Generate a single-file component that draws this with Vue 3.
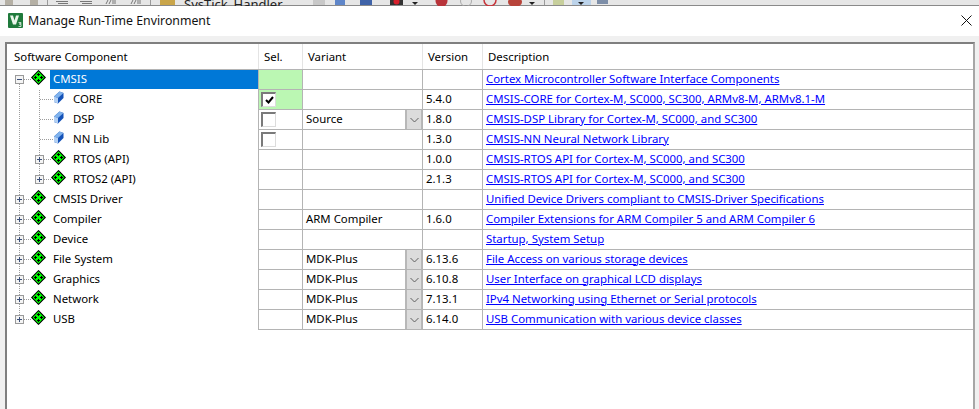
<script setup>
const rows = [
  { name: 'CMSIS', depth: 0, open: true, selected: true, green: true, link: 'Cortex Microcontroller Software Interface Components' },
  { name: 'CORE', depth: 1, leaf: true, green: true, check: 'on', version: '5.4.0', link: 'CMSIS-CORE for Cortex-M, SC000, SC300, ARMv8-M, ARMv8.1-M' },
  { name: 'DSP', depth: 1, leaf: true, check: 'off', variant: 'Source', drop: true, version: '1.8.0', link: 'CMSIS-DSP Library for Cortex-M, SC000, and SC300' },
  { name: 'NN Lib', depth: 1, leaf: true, check: 'off', version: '1.3.0', link: 'CMSIS-NN Neural Network Library' },
  { name: 'RTOS (API)', depth: 1, version: '1.0.0', link: 'CMSIS-RTOS API for Cortex-M, SC000, and SC300' },
  { name: 'RTOS2 (API)', depth: 1, version: '2.1.3', link: 'CMSIS-RTOS API for Cortex-M, SC000, and SC300' },
  { name: 'CMSIS Driver', depth: 0, link: 'Unified Device Drivers compliant to CMSIS-Driver Specifications' },
  { name: 'Compiler', depth: 0, variant: 'ARM Compiler', version: '1.6.0', link: 'Compiler Extensions for ARM Compiler 5 and ARM Compiler 6' },
  { name: 'Device', depth: 0, link: 'Startup, System Setup' },
  { name: 'File System', depth: 0, variant: 'MDK-Plus', drop: true, version: '6.13.6', link: 'File Access on various storage devices' },
  { name: 'Graphics', depth: 0, variant: 'MDK-Plus', drop: true, version: '6.10.8', link: 'User Interface on graphical LCD displays' },
  { name: 'Network', depth: 0, variant: 'MDK-Plus', drop: true, version: '7.13.1', link: 'IPv4 Networking using Ethernet or Serial protocols' },
  { name: 'USB', depth: 0, variant: 'MDK-Plus', drop: true, version: '6.14.0', link: 'USB Communication with various device classes' }
]

const hLines = rows.map((r, i) => {
  const y = i * 20 + 9.5
  if (r.leaf) return { x1: 33, x2: 47, y }
  if (r.depth === 1) return { x1: 37, x2: 44, y }
  return { x1: 17, x2: 24, y }
})
</script>

<template>
  <div class="page">
    <svg class="toolbar" width="979" height="6" viewBox="0 0 979 6">
      <rect width="979" height="5" fill="#e6e6e6" />
      <rect y="5" width="979" height="1" fill="#8a8a8a" />
      <rect x="5" width="8" height="5" fill="#b5b0a5" />
      <rect x="30" width="8" height="5" fill="#b5b0a5" />
      <rect x="47" width="1" height="5" fill="#9a9a9a" />
      <rect x="56" y="1" width="12" height="1" fill="#777" />
      <rect x="58" y="3" width="10" height="1" fill="#777" />
      <rect x="80" y="1" width="12" height="1" fill="#777" />
      <rect x="82" y="3" width="10" height="1" fill="#777" />
      <path d="M106 4l2-4M109 4l2-4M112 1h4M112 3h4M131 4l2-4M134 4l2-4M137 1h4M137 3h4" stroke="#777" fill="none" />
      <rect x="150" width="1" height="5" fill="#9a9a9a" />
      <rect x="160" width="15" height="5" fill="#c9a54a" />
      <text x="184" y="9" class="tb-text">SysTick_Handler</text>
      <rect x="313" width="12" height="5" fill="#c8c8c8" />
      <rect x="335" width="10" height="5" fill="#5f86c9" />
      <rect x="360" width="12" height="5" fill="#3f63a8" />
      <rect x="390" width="13" height="5" fill="#333" />
      <circle cx="396.500" cy="1.500" r="3" fill="#d8202c" />
      <path d="M412 2h6l-3 3z" fill="#222" />
      <circle cx="441.500" cy="1" r="6" fill="#b8343a" />
      <circle cx="466" cy="1" r="5.500" fill="none" stroke="#aaa" />
      <circle cx="490" cy="0" r="6" fill="none" stroke="#c8343a" stroke-width="1.500" />
      <ellipse cx="515" cy="2" rx="7" ry="5" fill="#b8443a" />
      <path d="M529 2h6l-3 3z" fill="#222" />
      <rect x="544" width="1" height="5" fill="#9a9a9a" />
      <rect x="553" width="11" height="5" fill="#c7cf9c" />
      <rect x="572" width="19" height="5" fill="#bcd3ea" />
      <path d="M578 2h6l-3 3z" fill="#222" />
      <rect x="597" width="11" height="4" fill="#7d8ea8" />
    </svg>

    <header class="title-bar">
      <svg class="logo" width="15" height="15" viewBox="0 0 15 15">
        <rect width="15" height="15" rx="1" fill="#1f7a3c" />
        <path d="M2 2.500h3l1.500 5 1.500-5h3l-3 9H5z" fill="#eaf5ea" />
        <path d="M10.500 9.500h2.500v1.200h-1.500v.6h1.500V13.500h-2.500" fill="none" stroke="#fff" stroke-width=".7" />
      </svg>
      <span class="title">Manage Run-Time Environment</span>
      <svg class="close" width="11" height="11" viewBox="0 0 11 11">
        <path d="M.5.500l10 10M10.500.500l-10 10" stroke="#111" stroke-width="1" fill="none" />
      </svg>
    </header>

    <main class="body">
      <section class="panel">
        <div class="head">
          <div class="hc c-tree">Software Component</div>
          <div class="hc c-sel">Sel.</div>
          <div class="hc c-var">Variant</div>
          <div class="hc c-ver">Version</div>
          <div class="hc c-desc">Description</div>
        </div>

        <div class="rows">
          <svg class="guides" width="252" height="260" viewBox="0 0 252 260">
            <g stroke="#9c9c9c" stroke-dasharray="1 1" shape-rendering="crispEdges">
              <line x1="12.500" y1="14" x2="12.500" y2="245" />
              <line x1="32.500" y1="20" x2="32.500" y2="105" />
              <line v-for="(l, i) in hLines" :key="i" :x1="l.x1" :x2="l.x2" :y1="l.y" :y2="l.y" />
            </g>
          </svg>

          <div v-for="r in rows" :key="r.name" class="row">
            <div class="cell c-tree tree" :class="{ deep: r.depth === 1 }">
              <span class="twisty" :class="{ hidden: r.leaf }">
                <svg width="9" height="9" viewBox="0 0 9 9">
                  <rect x=".5" y=".5" width="8" height="8" fill="#f4f4f4" stroke="#9a9a9a" />
                  <path d="M2 4.500h5" stroke="#3a4f7a" fill="none" />
                  <path v-if="!r.open" d="M4.500 2v5" stroke="#3a4f7a" fill="none" />
                </svg>
              </span>
              <svg v-if="r.leaf" class="node" width="15" height="15" viewBox="0 0 15 15">
                <path d="M3 6.500L8.500 1.500 12.500 3v5L7 13.500 3 12z" fill="#1553b8" />
                <path d="M3 6.500L8.500 1.500 12.500 3 7 8z" fill="#7fb2ec" />
                <path d="M3 6.500L7 8v5.500L3 12z" fill="#b4d0f2" />
              </svg>
              <svg v-else class="node" width="15" height="15" viewBox="0 0 15 15">
                <path d="M7.500.700l6.800 6.800-6.800 6.800L.7 7.500z" fill="#00ff00" stroke="#000" stroke-width="1.100" />
                <path d="M6 4.500h3M7.500 3v3M6 10.500h3M7.500 9v3M3 7.500h3M4.500 6v3M9 7.500h3M10.500 6v3" stroke="#000" fill="none" />
              </svg>
              <span class="label" :class="{ selected: r.selected }"><span class="txt">{{ r.name }}</span></span>
            </div>
            <div class="cell c-sel" :class="{ green: r.green }">
              <span v-if="r.check" class="check">
                <svg v-if="r.check === 'on'" width="9" height="8" viewBox="0 0 9 8">
                  <path d="M1 4l2.500 2.500 4.500-5.500" fill="none" stroke="#000" stroke-width="2" />
                </svg>
              </span>
            </div>
            <div class="cell c-var">
              <span class="txt">{{ r.variant }}</span>
              <span v-if="r.drop" class="drop">
                <svg width="9" height="6" viewBox="0 0 9 6">
                  <path d="M.5 1l4 4 4-4" fill="none" stroke="#606060" />
                </svg>
              </span>
            </div>
            <div class="cell c-ver"><span class="txt">{{ r.version }}</span></div>
            <div class="cell c-desc"><a href="#" class="link txt" @click.prevent>{{ r.link }}</a></div>
          </div>
        </div>
      </section>
    </main>
  </div>
</template>

<style>
html, body { margin: 0; background: #f0f0f0; }
</style>

<style scoped>
.page {
  width: 979px;
  height: 409px;
  display: flex;
  flex-direction: column;
  overflow: hidden;
  font-family: "Noto Sans", "Open Sans", sans-serif;
  font-size: 11.4px;
  color: #000;
}
.toolbar { display: block; flex: none; }
.tb-text { font-size: 13px; fill: #222; }
.title-bar {
  flex: none;
  height: 30px;
  box-sizing: border-box;
  background: #fff;
  display: flex;
  align-items: center;
  padding: 0 7px 2px 8px;
}
.logo { flex: none; }
.title { margin-left: 5px; font-size: 12.300px; flex: 1; color: #111; }
.close { flex: none; }
.body {
  flex: 1;
  min-height: 0;
  display: flex;
  background: #f0f0f0;
  padding: 6px 4px 0 5px;
}
.panel {
  flex: 1;
  background: #fff;
  border-left: 2px solid #7f7f7f;
  border-top: 2px solid #7f7f7f;
  border-right: 2px solid #a6a6a6;
}
.head {
  display: flex;
  height: 26px;
  border-bottom: 1px solid #b4b4b4;
  box-sizing: border-box;
}
.hc {
  display: flex;
  align-items: center;
  box-sizing: border-box;
  padding-left: 5px;
  border-right: 1px solid #e4e4e4;
}
.head .c-tree { padding-left: 7px; }
.head .c-desc { border-right: 0; }
.c-tree { width: 252px; flex: none; box-sizing: border-box; }
.c-sel { width: 44px; flex: none; box-sizing: border-box; }
.c-var { width: 120px; flex: none; box-sizing: border-box; }
.c-ver { width: 60px; flex: none; box-sizing: border-box; }
.c-desc { flex: 1; box-sizing: border-box; }
.rows { position: relative; }
.guides { position: absolute; left: 0; top: 0; }
.row { display: flex; height: 20px; }
.cell {
  display: flex;
  align-items: center;
  border-right: 1px solid #b4b4b4;
  border-bottom: 1px solid #b4b4b4;
  padding-left: 3px;
}
.txt { display: block; padding-bottom: 3px; }
.c-desc.cell { border-right: 0; }
.tree {
  border-bottom: 0;
  padding-left: 8px;
}
.tree.deep { padding-left: 28px; }
.twisty { width: 9px; height: 9px; flex: none; margin-bottom: 1px; position: relative; z-index: 1; }
.twisty svg { display: block; }
.twisty.hidden { visibility: hidden; }
.node { flex: none; margin: -5px 0 0 7px; position: relative; z-index: 1; }
.label {
  flex: 1;
  margin-left: 4px;
  padding-left: 3px;
  height: 19px;
  align-self: flex-start;
  display: flex;
  align-items: center;
}
.label.selected { background: #0078d7; color: #fff; }
.green { background: #bbf7b3; }
.c-sel.cell { padding-left: 2px; }
.check {
  width: 15px;
  height: 15px;
  box-sizing: border-box;
  background: #fff;
  border-top: 2px solid #7a7a7a;
  border-left: 2px solid #7a7a7a;
  border-right: 1px solid #dcdcdc;
  border-bottom: 1px solid #dcdcdc;
  display: flex;
  align-items: center;
  justify-content: center;
}
.c-var.cell { justify-content: space-between; }
.drop {
  width: 17px;
  box-sizing: border-box;
  align-self: stretch;
  background: #dcdcdc;
  border-left: 2px solid #b8b8b8;
  border-right: 1px solid #b8b8b8;
  display: flex;
  align-items: center;
  justify-content: center;
}
.link { color: #0000ff; text-decoration: underline; }
</style>
